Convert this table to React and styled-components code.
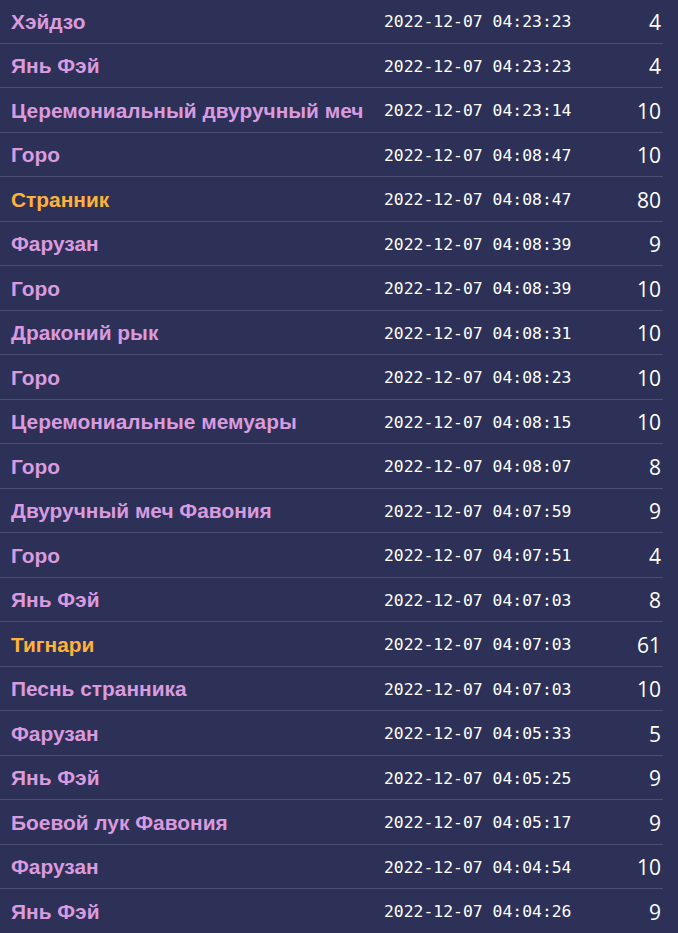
import React from 'react'
import styled, { createGlobalStyle } from "styled-components";

const GlobalStyle = createGlobalStyle`
  html, body {
    margin: 0;
    padding: 0;
    background: #2d3157;
  }
`;

const Page = styled.div`
  width: 678px;
  height: 933px;
  overflow: hidden;
  background: #2d3157;
`;

const Table = styled.div`
  width: 663px;
  margin-top: -1px;
`;

const Row = styled.div`
  box-sizing: border-box;
  display: grid;
  grid-template-columns: 373px 1fr auto;
  align-items: center;
  height: 44.5px;
  padding: 2px 2px 0 11px;
  border-bottom: 1px solid #4b4f6f;
`;

const Name = styled.div`
  font-family: "Liberation Sans", Arial, sans-serif;
  font-weight: 700;
  font-size: 20.9px;
  color: ${p => (p.$gold ? "#ffb13b" : "#d99ade")};
  white-space: nowrap;
`;

const Time = styled.div`
  font-family: "DejaVu Sans Mono", monospace;
  font-size: 16.4px;
  color: #ffffff;
`;

const Count = styled.div`
  font-family: "Open Sans", sans-serif;
  font-size: 21px;
  color: #ffffff;
  text-align: right;
`;

const rows = [
  ["Хэйдзо", "2022-12-07 04:23:23", 4],
  ["Янь Фэй", "2022-12-07 04:23:23", 4],
  ["Церемониальный двуручный меч", "2022-12-07 04:23:14", 10],
  ["Горо", "2022-12-07 04:08:47", 10],
  ["Странник", "2022-12-07 04:08:47", 80, true],
  ["Фарузан", "2022-12-07 04:08:39", 9],
  ["Горо", "2022-12-07 04:08:39", 10],
  ["Драконий рык", "2022-12-07 04:08:31", 10],
  ["Горо", "2022-12-07 04:08:23", 10],
  ["Церемониальные мемуары", "2022-12-07 04:08:15", 10],
  ["Горо", "2022-12-07 04:08:07", 8],
  ["Двуручный меч Фавония", "2022-12-07 04:07:59", 9],
  ["Горо", "2022-12-07 04:07:51", 4],
  ["Янь Фэй", "2022-12-07 04:07:03", 8],
  ["Тигнари", "2022-12-07 04:07:03", 61, true],
  ["Песнь странника", "2022-12-07 04:07:03", 10],
  ["Фарузан", "2022-12-07 04:05:33", 5],
  ["Янь Фэй", "2022-12-07 04:05:25", 9],
  ["Боевой лук Фавония", "2022-12-07 04:05:17", 9],
  ["Фарузан", "2022-12-07 04:04:54", 10],
  ["Янь Фэй", "2022-12-07 04:04:26", 9],
];

export default function App() {
  return (
    <>
      <GlobalStyle />
      <Page>
        <Table>
          {rows.map(([name, time, count, gold], i) => (
            <Row key={i}>
              <Name $gold={gold}>{name}</Name>
              <Time>{time}</Time>
              <Count>{count}</Count>
            </Row>
          ))}
        </Table>
      </Page>
    </>
  )
}
